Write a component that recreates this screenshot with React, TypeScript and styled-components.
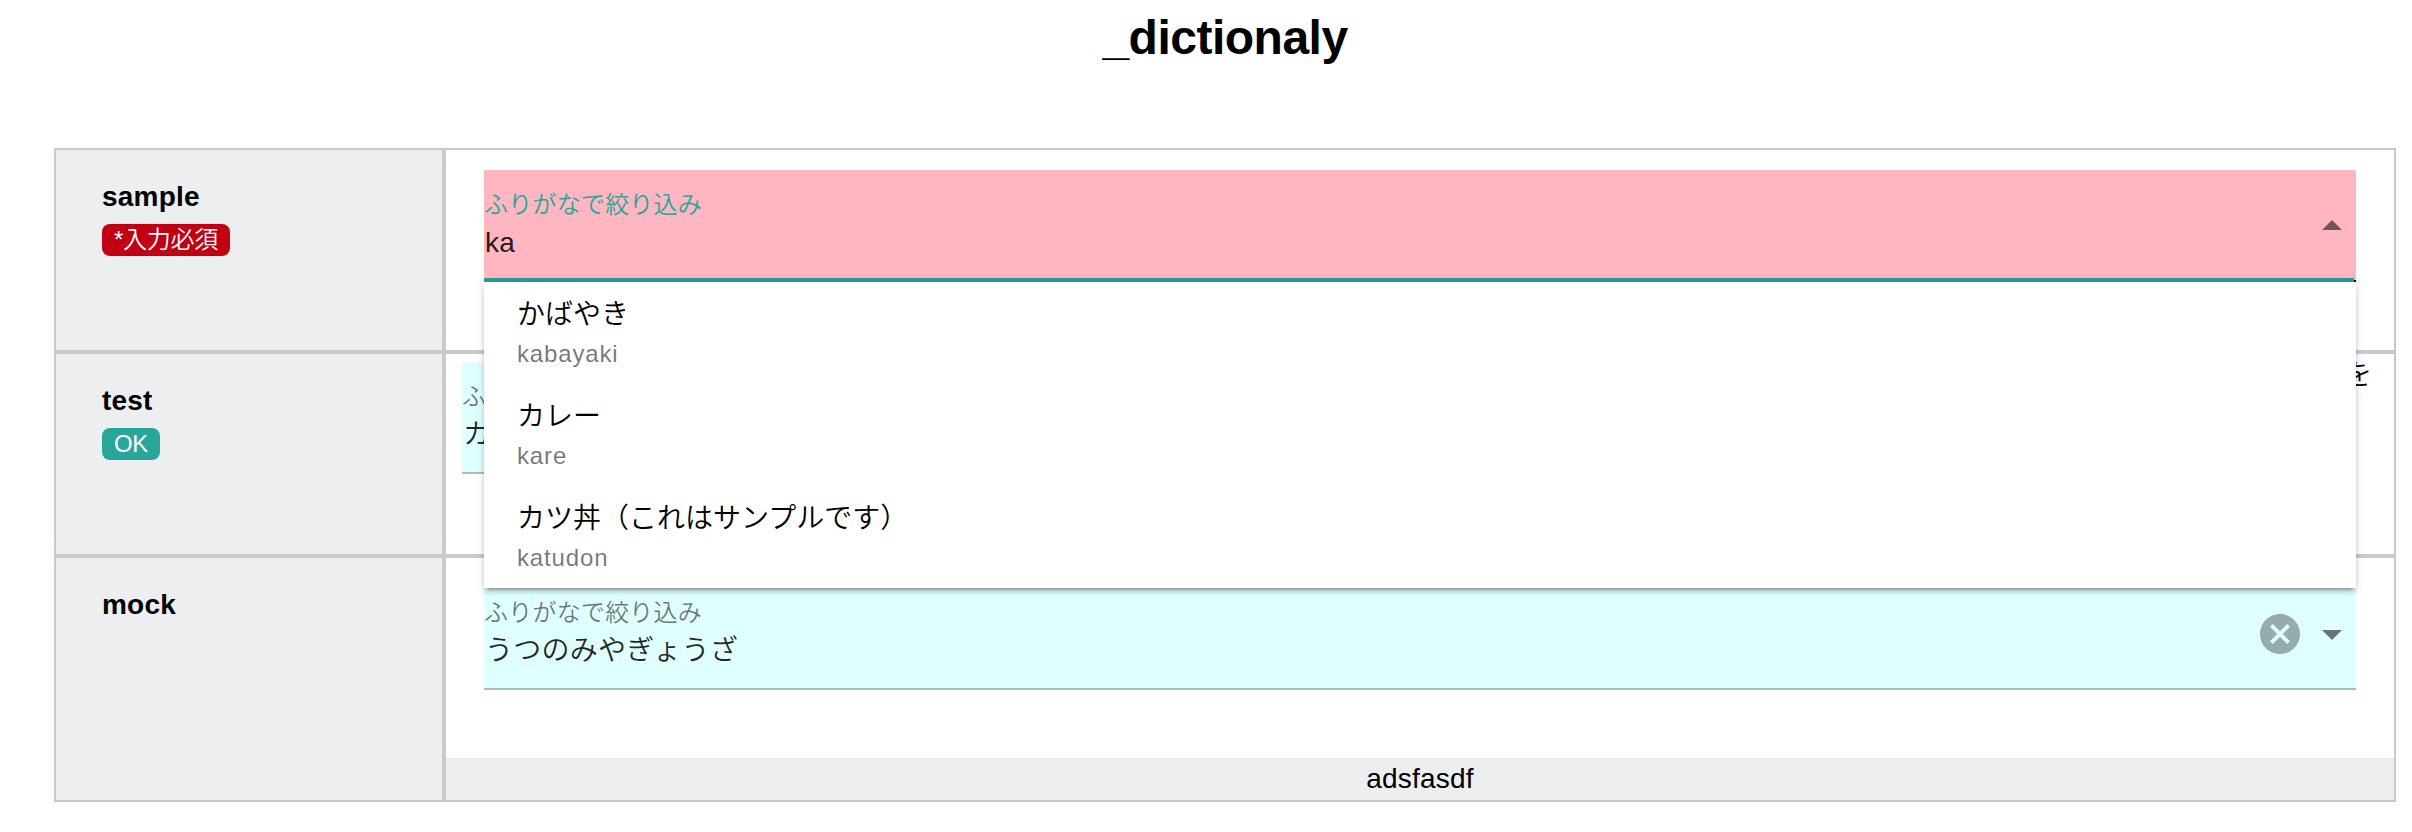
import React from 'react';
import styled, { createGlobalStyle } from 'styled-components';

const GlobalStyle = createGlobalStyle`
  * { box-sizing: border-box; }
  body {
    margin: 0;
    background: #fff;
    color: #000;
    font: 28px/32px "Liberation Sans", "Noto Sans CJK JP", sans-serif;
  }
`;

const Page = styled.main`
  width: 2342px;
  margin-left: 54px;
  padding-bottom: 30px;
`;

const Title = styled.h1`
  margin: 0;
  height: 148px;
  padding-top: 10px;
  font-size: 48px;
  line-height: 56px;
  letter-spacing: -0.5px;
  text-align: center;
`;

const Table = styled.section`
  border: 2px solid #cacaca;
`;

const Row = styled.div<{ $height: number }>`
  display: grid;
  grid-template-columns: 390px 1fr;
  height: ${(p) => p.$height}px;

  & + & { border-top: 4px solid #cacaca; }
`;

const Heading = styled.div`
  display: flex;
  flex-direction: column;
  align-items: flex-start;
  gap: 11px;
  padding: 31px 46px;
  background: #edeef0;
  border-right: 4px solid #cacaca;
`;

const Name = styled.strong`
  line-height: 32px;
  letter-spacing: 0.2px;
`;

const Badge = styled.span<{ $color: string }>`
  height: 32px;
  padding: 0 12px;
  border-radius: 8px;
  background: ${(p) => p.$color};
  color: #fff;
  font-size: 24px;
  font-weight: 350;
  line-height: 31px;
  letter-spacing: -0.3px;
  white-space: nowrap;
`;

const Cell = styled.div<{ $inset?: boolean }>`
  display: flex;
  flex-direction: column;
  min-width: 0;
  padding-top: ${(p) => (p.$inset ? 8 : 20)}px;
`;

const FieldBox = styled.div`
  position: relative;
  margin: 0 38px;
`;

const SplitLine = styled.div`
  display: flex;
  justify-content: space-between;
  padding: 0 22px 0 16px;
`;

const Suffix = styled.span`
  font-weight: 350;
  line-height: 27px;
`;

const Field = styled.div<{ $bg: string; $focused?: boolean; $width?: number }>`
  display: flex;
  justify-content: space-between;
  width: ${(p) => (p.$width ? `${p.$width}px` : '100%')};
  height: 112px;
  padding-top: 21px;
  background: ${(p) =>
    p.$focused
      ? `linear-gradient(#26a096, #26a096) 0 100% / calc(100% - 2px) 4px no-repeat,
         linear-gradient(#000, #000) 100% 100% / 2px 2px no-repeat, ${p.$bg}`
      : `linear-gradient(#a9bfbf, #a9bfbf) 0 100% / 100% 2px no-repeat, ${p.$bg}`};
`;

const FieldText = styled.div`
  display: flex;
  flex-direction: column;
  font-weight: 350;
`;

const Label = styled.label<{ $focused?: boolean }>`
  font-size: 24px;
  line-height: 28px;
  letter-spacing: 0.00938em;
  color: ${(p) => (p.$focused ? '#26a69a' : 'rgba(0, 0, 0, 0.54)')};
`;

const Value = styled.span`
  margin-top: 6px;
  padding-left: 1px;
  line-height: 36px;
  letter-spacing: 0.00938em;
  color: rgba(0, 0, 0, 0.87);
`;

const Actions = styled.div`
  display: flex;
  gap: 4px;
  padding: 11px 0.5px 0 0;
`;

const Icon = styled.svg<{ $faded?: boolean }>`
  width: 48px;
  height: 48px;
  fill: rgba(0, 0, 0, ${(p) => (p.$faded ? 0.33 : 0.54)});
`;

const Menu = styled.ul`
  position: absolute;
  z-index: 2;
  top: 100%;
  left: 0;
  width: 100%;
  margin: 0;
  padding: 0;
  list-style: none;
  background: #fff;
  box-shadow: 0 6px 2px -4px rgba(0, 0, 0, 0.2), 0 4px 4px rgba(0, 0, 0, 0.14),
    0 2px 10px rgba(0, 0, 0, 0.12);
`;

const Option = styled.li`
  display: flex;
  flex-direction: column;
  height: 102px;
  padding: 14px 33px 0;
`;

const OptionName = styled.span`
  font-weight: 350;
  line-height: 38px;
`;

const OptionReading = styled.span`
  margin-top: 4px;
  font-size: 24px;
  line-height: 32px;
  letter-spacing: 0.85px;
  color: rgba(0, 0, 0, 0.54);
`;

const Footer = styled.div`
  height: 42px;
  margin-top: auto;
  padding-top: 5px;
  background: #edeef0;
  text-align: center;
  letter-spacing: 0.2px;
`;

const options = [
  { name: 'かばやき', reading: 'kabayaki' },
  { name: 'カレー', reading: 'kare' },
  { name: 'カツ丼（これはサンプルです）', reading: 'katudon' },
];

interface ComboProps {
  value: string;
  color: string;
  open?: boolean;
  clearable?: boolean;
  width?: number;
}

function Combo({ value, color, open, clearable, width }: ComboProps) {
  return (
    <Field $bg={color} $focused={open} $width={width}>
      <FieldText>
        <Label $focused={open}>ふりがなで絞り込み</Label>
        <Value>{value}</Value>
      </FieldText>
      <Actions>
        {clearable && (
          <Icon $faded viewBox="0 0 24 24">
            <path d="M12 2C6.47 2 2 6.47 2 12s4.47 10 10 10 10-4.47 10-10S17.53 2 12 2zm5 13.59L15.59 17 12 13.41 8.41 17 7 15.59 10.59 12 7 8.41 8.41 7 12 10.59 15.59 7 17 8.41 13.41 12 17 15.59z" />
          </Icon>
        )}
        <Icon viewBox="0 0 24 24">
          <path d={open ? 'M7 14l5-5 5 5z' : 'M7 10l5 5 5-5z'} />
        </Icon>
      </Actions>
    </Field>
  );
}

export default function App() {
  return (
    <>
      <GlobalStyle />
      <Page>
        <Title>_dictionaly</Title>
        <Table>
          <Row $height={200}>
            <Heading>
              <Name>sample</Name>
              <Badge $color="#c20014">*入力必須</Badge>
            </Heading>
            <Cell>
              <FieldBox>
                <Combo value="ka" color="#ffb6c1" open />
                <Menu>
                  {options.map((o) => (
                    <Option key={o.reading}>
                      <OptionName>{o.name}</OptionName>
                      <OptionReading>{o.reading}</OptionReading>
                    </Option>
                  ))}
                </Menu>
              </FieldBox>
            </Cell>
          </Row>
          <Row $height={204}>
            <Heading>
              <Name>test</Name>
              <Badge $color="#28a699">OK</Badge>
            </Heading>
            <Cell $inset>
              <SplitLine>
                <Combo value="カレー" color="#e0ffff" width={1800} />
                <Suffix>を</Suffix>
              </SplitLine>
            </Cell>
          </Row>
          <Row $height={246}>
            <Heading>
              <Name>mock</Name>
            </Heading>
            <Cell>
              <FieldBox>
                <Combo value="うつのみやぎょうざ" color="#e0ffff" clearable />
              </FieldBox>
              <Footer>adsfasdf</Footer>
            </Cell>
          </Row>
        </Table>
      </Page>
    </>
  );
}
